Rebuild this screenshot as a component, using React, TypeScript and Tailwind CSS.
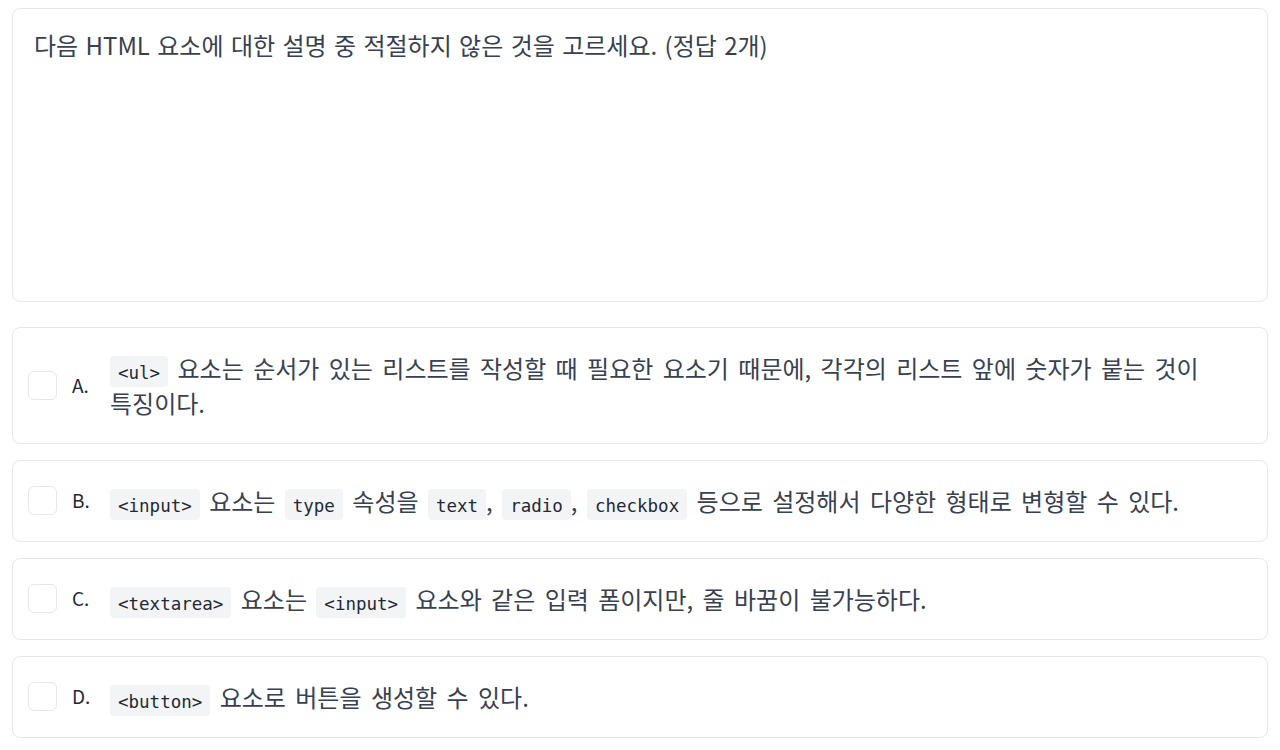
import type { ReactNode } from 'react'

const Code = ({ children }: { children: ReactNode }) => (
  <code className="rounded-[4px] bg-[#f3f4f6] px-2 pb-[4.5px] pt-[6.5px] font-['DejaVu_Sans_Mono',monospace] text-[17.5px] leading-none text-[#1f2937] [word-spacing:0]">
    {children}
  </code>
)

type Option = {
  letter: string
  body: ReactNode
}

const options: Option[] = [
  {
    letter: 'A.',
    body: (
      <>
        <Code>{'<ul>'}</Code> 요소는 순서가 있는 리스트를 작성할 때 필요한 요소기 때문에, 각각의 리스트 앞에 숫자가 붙는 것이 특징이다.
      </>
    ),
  },
  {
    letter: 'B.',
    body: (
      <>
        <Code>{'<input>'}</Code> 요소는 <Code>type</Code> 속성을 <Code>text</Code>, <Code>radio</Code>, <Code>checkbox</Code> 등으로 설정해서 다양한 형태로 변형할 수 있다.
      </>
    ),
  },
  {
    letter: 'C.',
    body: (
      <>
        <Code>{'<textarea>'}</Code> 요소는 <Code>{'<input>'}</Code> 요소와 같은 입력 폼이지만, 줄 바꿈이 불가능하다.
      </>
    ),
  },
  {
    letter: 'D.',
    body: (
      <>
        <Code>{'<button>'}</Code> 요소로 버튼을 생성할 수 있다.
      </>
    ),
  },
]

export default function App() {
  return (
    <div className="min-h-[750px] bg-white px-3 pt-2 font-['Noto_Sans_CJK_KR',sans-serif] text-[#374151]">
      <div className="min-h-[294px] rounded-lg border border-[#e5e7eb] px-[21px] pb-5 pt-[18px] text-[24px] leading-[35px] [word-spacing:2px]">
        다음 HTML 요소에 대한 설명 중 적절하지 않은 것을 고르세요. (정답 2개)
      </div>

      <div className="mt-[25px] flex flex-col gap-4">
        {options.map((option) => (
          <div
            key={option.letter}
            className="flex items-center rounded-lg border border-[#e5e7eb] pb-[23px] pt-[22px] pl-[15px] pr-6"
          >
            <span className="size-[29px] shrink-0 rounded-md border border-[#e5e7eb] bg-white" />
            <span className="ml-[15px] w-[38px] shrink-0 text-[19px] text-[#1f2937]">{option.letter}</span>
            <p className="break-keep text-[24px] leading-[35px] [word-spacing:4px]">{option.body}</p>
          </div>
        ))}
      </div>
    </div>
  )
}
